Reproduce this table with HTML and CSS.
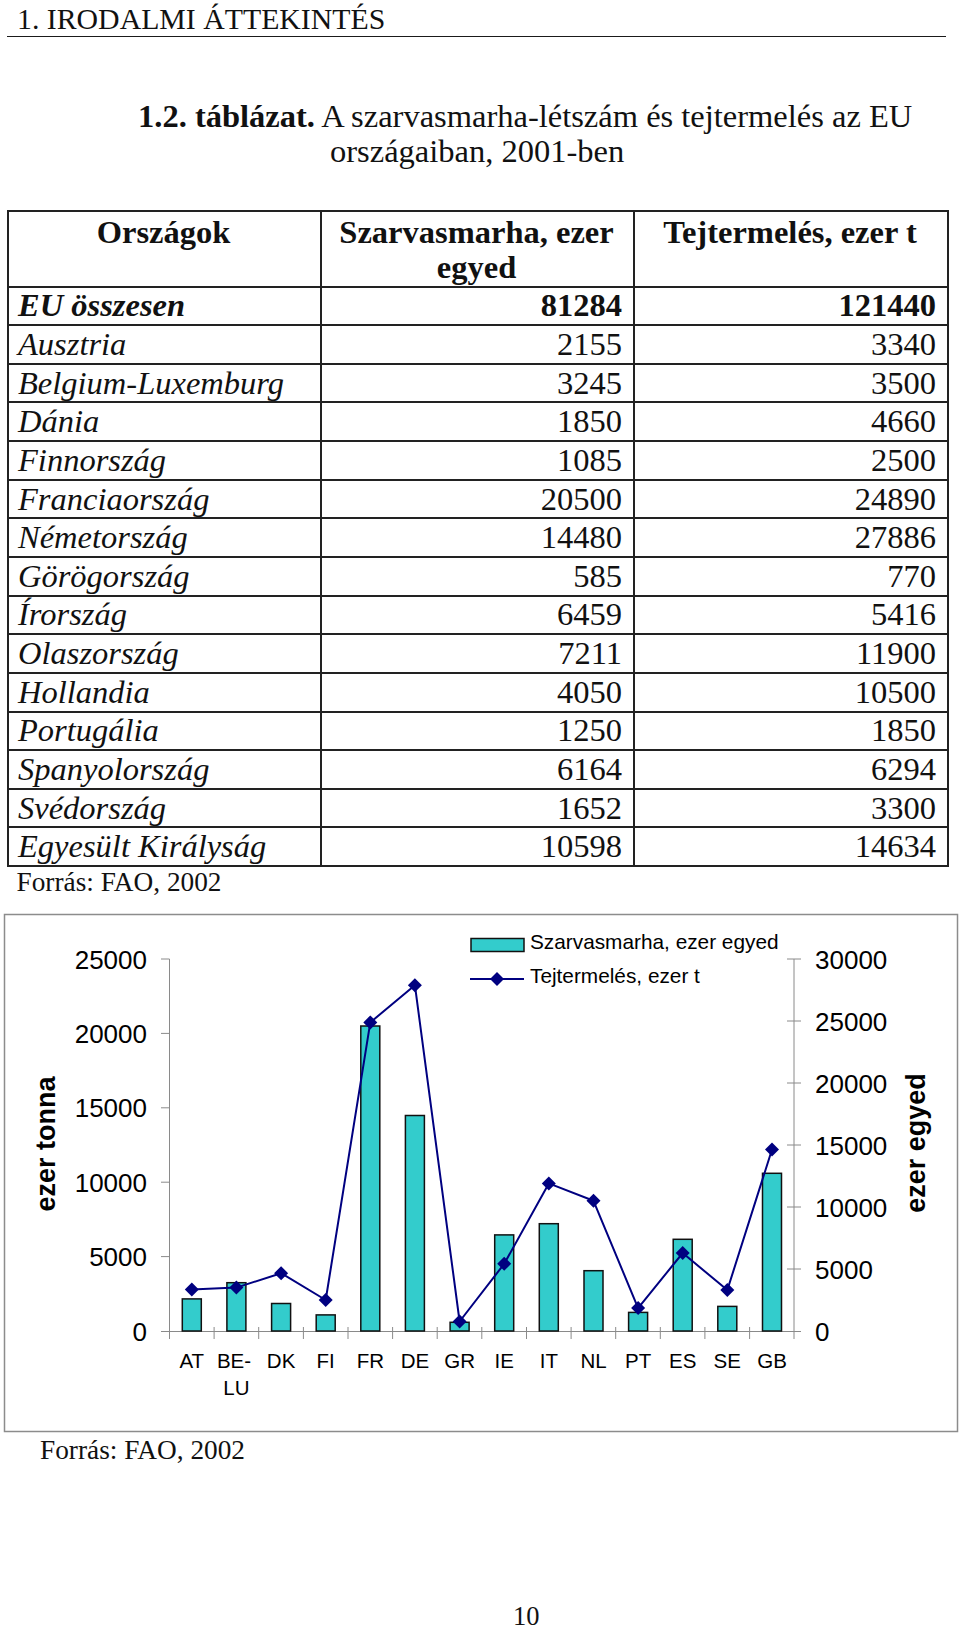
FILE: index.html
```html
<!DOCTYPE html>
<html lang="hu">
<head>
<meta charset="utf-8">
<title>1. Irodalmi áttekintés</title>
<link rel="stylesheet" href="styles.css">
</head>
<body>
<div class="head">1. IRODALMI ÁTTEKINTÉS</div>

<p class="caption"><b>1.2. táblázat.</b> A szarvasmarha-létszám és tejtermelés az EU<br>országaiban, 2001-ben</p>

<table class="data">
  <colgroup><col class="c1"><col class="c2"><col class="c3"></colgroup>
  <thead>
    <tr><th>Országok</th><th>Szarvasmarha, ezer egyed</th><th>Tejtermelés, ezer t</th></tr>
  </thead>
  <tbody>
    <tr class="total"><td class="name">EU összesen</td><td>81284</td><td>121440</td></tr>
    <tr><td class="name">Ausztria</td><td>2155</td><td>3340</td></tr>
    <tr><td class="name">Belgium-Luxemburg</td><td>3245</td><td>3500</td></tr>
    <tr><td class="name">Dánia</td><td>1850</td><td>4660</td></tr>
    <tr><td class="name">Finnország</td><td>1085</td><td>2500</td></tr>
    <tr><td class="name">Franciaország</td><td>20500</td><td>24890</td></tr>
    <tr><td class="name">Németország</td><td>14480</td><td>27886</td></tr>
    <tr><td class="name">Görögország</td><td>585</td><td>770</td></tr>
    <tr><td class="name">Írország</td><td>6459</td><td>5416</td></tr>
    <tr><td class="name">Olaszország</td><td>7211</td><td>11900</td></tr>
    <tr><td class="name">Hollandia</td><td>4050</td><td>10500</td></tr>
    <tr><td class="name">Portugália</td><td>1250</td><td>1850</td></tr>
    <tr><td class="name">Spanyolország</td><td>6164</td><td>6294</td></tr>
    <tr><td class="name">Svédország</td><td>1652</td><td>3300</td></tr>
    <tr><td class="name">Egyesült Királyság</td><td>10598</td><td>14634</td></tr>
  </tbody>
</table>
<p class="source source-table">Forrás: FAO, 2002</p>

<svg class="chart" width="960" height="522" viewBox="0 913 960 522" xmlns="http://www.w3.org/2000/svg">
  <defs>
    <path id="dia" d="M0,-7 L7,0 L0,7 L-7,0 Z"/>
  </defs>
  <rect x="4.5" y="915.5" width="953" height="517" fill="#fff" stroke="#8c8c8c" stroke-width="1.5"/>

  <!-- axes -->
  <g stroke="#8a8a8a" stroke-width="1" fill="none">
    <line x1="169.5" y1="960" x2="169.5" y2="1332"/>
    <line x1="794" y1="960" x2="794" y2="1332"/>
    <line x1="161" y1="1332.5" x2="801" y2="1332.5"/>
    <!-- left ticks -->
    <line x1="161" y1="960" x2="169.5" y2="960"/>
    <line x1="161" y1="1034.4" x2="169.5" y2="1034.4"/>
    <line x1="161" y1="1108.8" x2="169.5" y2="1108.8"/>
    <line x1="161" y1="1183.2" x2="169.5" y2="1183.2"/>
    <line x1="161" y1="1257.6" x2="169.5" y2="1257.6"/>
    <!-- right ticks -->
    <line x1="787" y1="960" x2="801" y2="960"/>
    <line x1="787" y1="1022" x2="801" y2="1022"/>
    <line x1="787" y1="1084" x2="801" y2="1084"/>
    <line x1="787" y1="1146" x2="801" y2="1146"/>
    <line x1="787" y1="1208" x2="801" y2="1208"/>
    <line x1="787" y1="1270" x2="801" y2="1270"/>
    <!-- category ticks -->
    <line x1="214.1" y1="1328" x2="214.1" y2="1340"/>
    <line x1="258.7" y1="1328" x2="258.7" y2="1340"/>
    <line x1="303.4" y1="1328" x2="303.4" y2="1340"/>
    <line x1="348.0" y1="1328" x2="348.0" y2="1340"/>
    <line x1="392.6" y1="1328" x2="392.6" y2="1340"/>
    <line x1="437.2" y1="1328" x2="437.2" y2="1340"/>
    <line x1="481.8" y1="1328" x2="481.8" y2="1340"/>
    <line x1="526.5" y1="1328" x2="526.5" y2="1340"/>
    <line x1="571.1" y1="1328" x2="571.1" y2="1340"/>
    <line x1="615.7" y1="1328" x2="615.7" y2="1340"/>
    <line x1="660.3" y1="1328" x2="660.3" y2="1340"/>
    <line x1="704.9" y1="1328" x2="704.9" y2="1340"/>
    <line x1="749.6" y1="1328" x2="749.6" y2="1340"/>
    <line x1="169.5" y1="1332" x2="169.5" y2="1340"/>
    <line x1="794" y1="1332" x2="794" y2="1340"/>
  </g>

  <!-- axis labels -->
  <g class="tick" text-anchor="end">
    <text x="147" y="969.5">25000</text>
    <text x="147" y="1043.9">20000</text>
    <text x="147" y="1118.3">15000</text>
    <text x="147" y="1192.7">10000</text>
    <text x="147" y="1267.1">5000</text>
    <text x="147" y="1341.5">0</text>
  </g>
  <g class="tick" text-anchor="start">
    <text x="815" y="969.5">30000</text>
    <text x="815" y="1031.5">25000</text>
    <text x="815" y="1093.5">20000</text>
    <text x="815" y="1155.5">15000</text>
    <text x="815" y="1217.5">10000</text>
    <text x="815" y="1279.5">5000</text>
    <text x="815" y="1341.5">0</text>
  </g>
  <text class="axis-title" transform="translate(55,1145) rotate(-90)" text-anchor="middle">ezer tonna</text>
  <text class="axis-title" transform="translate(925,1144) rotate(-90)" text-anchor="middle">ezer egyed</text>

  <!-- category labels -->
  <g class="cat" text-anchor="middle">
    <text x="191.8" y="1369">AT</text>
    <text x="234" y="1369">BE-</text>
    <text x="236.4" y="1396">LU</text>
    <text x="281.1" y="1369">DK</text>
    <text x="325.7" y="1369">FI</text>
    <text x="370.3" y="1369">FR</text>
    <text x="414.9" y="1369">DE</text>
    <text x="459.6" y="1369">GR</text>
    <text x="504.2" y="1369">IE</text>
    <text x="548.8" y="1369">IT</text>
    <text x="593.5" y="1369">NL</text>
    <text x="638.1" y="1369">PT</text>
    <text x="682.7" y="1369">ES</text>
    <text x="727.3" y="1369">SE</text>
    <text x="772.0" y="1369">GB</text>
  </g>

  <!-- bars -->
  <g fill="#33cccc" stroke="#111" stroke-width="1.5">
    <rect x="182.3" y="1299.9" width="19" height="32.1"/>
    <rect x="226.9" y="1283.7" width="19" height="48.3"/>
    <rect x="271.6" y="1304.5" width="19" height="27.5"/>
    <rect x="316.2" y="1315.9" width="19" height="16.1"/>
    <rect x="360.8" y="1027.0" width="19" height="305"/>
    <rect x="405.4" y="1116.5" width="19" height="215.5"/>
    <rect x="450.1" y="1323.3" width="19" height="8.7"/>
    <rect x="494.7" y="1235.9" width="19" height="96.1"/>
    <rect x="539.3" y="1224.7" width="19" height="107.3"/>
    <rect x="584.0" y="1271.7" width="19" height="60.3"/>
    <rect x="628.6" y="1313.4" width="19" height="18.6"/>
    <rect x="673.2" y="1240.3" width="19" height="91.7"/>
    <rect x="717.8" y="1307.4" width="19" height="24.6"/>
    <rect x="762.5" y="1174.3" width="19" height="157.7"/>
  </g>

  <!-- line -->
  <polyline fill="none" stroke="#000080" stroke-width="2" stroke-linejoin="round"
    points="191.8,1290.6 236.4,1288.6 281.1,1274.2 325.7,1301 370.3,1023.4 414.9,986.2 459.6,1322.5 504.2,1264.8 548.8,1184.4 593.5,1201.8 638.1,1309.1 682.7,1254 727.3,1291.1 772.0,1150.5"/>
  <g fill="#000080">
    <use href="#dia" x="191.8" y="1290.6"/>
    <use href="#dia" x="236.4" y="1288.6"/>
    <use href="#dia" x="281.1" y="1274.2"/>
    <use href="#dia" x="325.7" y="1301"/>
    <use href="#dia" x="370.3" y="1023.4"/>
    <use href="#dia" x="414.9" y="986.2"/>
    <use href="#dia" x="459.6" y="1322.5"/>
    <use href="#dia" x="504.2" y="1264.8"/>
    <use href="#dia" x="548.8" y="1184.4"/>
    <use href="#dia" x="593.5" y="1201.8"/>
    <use href="#dia" x="638.1" y="1309.1"/>
    <use href="#dia" x="682.7" y="1254"/>
    <use href="#dia" x="727.3" y="1291.1"/>
    <use href="#dia" x="772.0" y="1150.5"/>
  </g>

  <!-- legend -->
  <rect x="471" y="939.5" width="53" height="13" fill="#33cccc" stroke="#111" stroke-width="1.5"/>
  <text class="legend" x="530" y="950">Szarvasmarha, ezer egyed</text>
  <line x1="470" y1="980" x2="524" y2="980" stroke="#000080" stroke-width="2"/>
  <use href="#dia" x="497" y="980" fill="#000080"/>
  <text class="legend" x="530" y="984">Tejtermelés, ezer t</text>
</svg>

<p class="source source-chart">Forrás: FAO, 2002</p>

<div class="pageno">10</div>
</body>
</html>
```

FILE: styles.css
```css
html, body {
  margin: 0;
  padding: 0;
  background: #fff;
}

body {
  font-family: "Liberation Serif", "Times New Roman", serif;
  color: #111;
  width: 960px;
}

.head {
  margin: 0 14px 0 7px;
  padding: 2px 0 0 10px;
  font-size: 29.8px;
  line-height: 34px;
  border-bottom: 1.5px solid #1a1a1a;
}

.caption {
  margin: 62px 0 0 330px;
  text-indent: -192px;
  font-size: 32.5px;
  line-height: 35px;
}

.caption b {
  font-weight: bold;
}

.data {
  margin: 40.5px 0 0 7px;
  width: 940px;
  table-layout: fixed;
  border-collapse: collapse;
  font-size: 32.5px;
  line-height: 35px;
}

.data .c1 { width: 313px; }
.data .c2 { width: 313px; }
.data .c3 { width: 314px; }

.data th,
.data td {
  border: 2px solid #222;
  padding: 0 11px 0 9px;
}

.data thead tr {
  height: 76px;
}

.data th {
  vertical-align: top;
  padding-top: 3px;
  font-weight: bold;
  text-align: center;
}

.data tbody tr {
  height: 38.65px;
}

.data td {
  vertical-align: middle;
  text-align: right;
  white-space: nowrap;
}

.data td.name {
  text-align: left;
  font-style: italic;
}

.data .total td {
  font-weight: bold;
}

.source {
  margin: 0;
  font-size: 27.3px;
  line-height: 30px;
}

.source-table {
  padding-left: 16.5px;
}

.chart {
  display: block;
  margin-top: 15.3px;
}

.source-chart {
  margin-top: 1px;
  padding-left: 40px;
}

.pageno {
  margin-top: 136px;
  padding-left: 513px;
  font-size: 26.5px;
  line-height: 30px;
}

.tick {
  font-family: "Liberation Sans", Arial, sans-serif;
  font-size: 26px;
  fill: #000;
}

.axis-title {
  font-family: "Liberation Sans", Arial, sans-serif;
  font-size: 27px;
  font-weight: bold;
  fill: #000;
}

.cat {
  font-family: "Liberation Sans", Arial, sans-serif;
  font-size: 20.5px;
  fill: #000;
}

.legend {
  font-family: "Liberation Sans", Arial, sans-serif;
  font-size: 20.8px;
  fill: #000;
}
```
